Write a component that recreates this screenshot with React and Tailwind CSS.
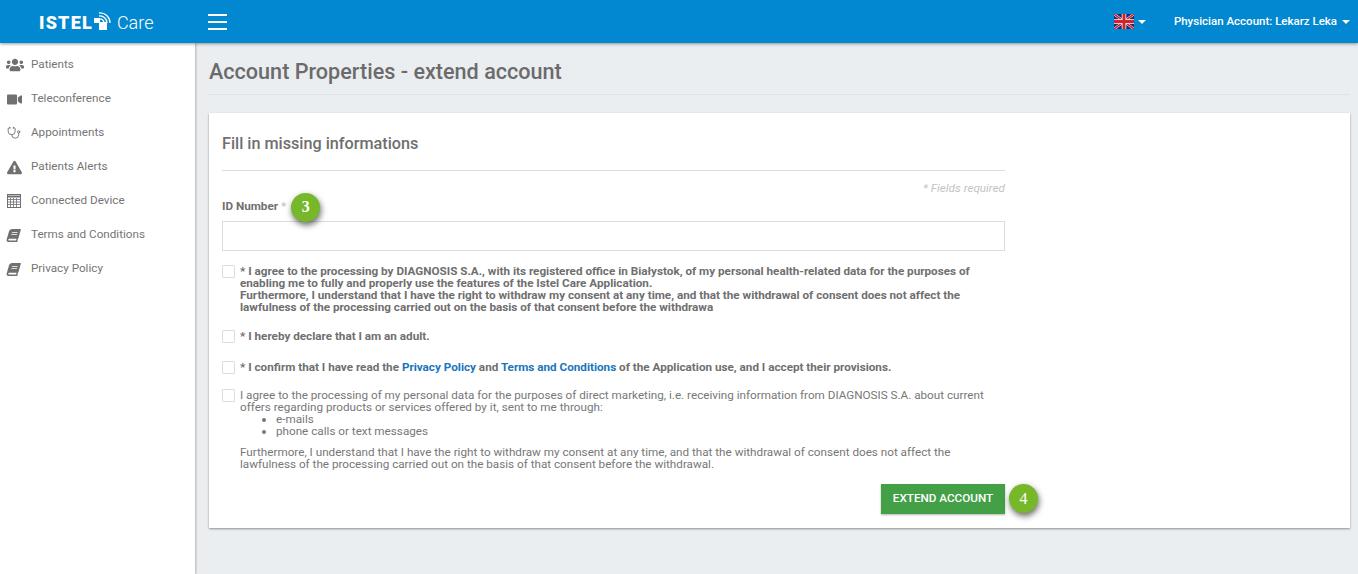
import React from "react";
import { FaUsers, FaVideo, FaExclamationTriangle, FaBook } from "react-icons/fa";
import { Stethoscope } from "lucide-react";

function GridIcon() {
  return (
    <svg width="14" height="14" viewBox="0 0 14 14" fill="none" stroke="currentColor">
      <rect x="0.5" y="0.5" width="13" height="13" strokeWidth="1" />
      <path d="M0.5 2.5h13" strokeWidth="2" />
      <path d="M0.5 5.5h13M0.5 8h13M0.5 10.5h13M3.5 4v9M6.5 4v9M9.5 4v9" strokeWidth="0.8" />
    </svg>
  );
}

const menu = [
  { label: "Patients", icon: <FaUsers size={18} className="-ml-[1px]" /> },
  { label: "Teleconference", icon: <FaVideo size={15} /> },
  { label: "Appointments", icon: <Stethoscope size={14} strokeWidth={1.5} /> },
  { label: "Patients Alerts", icon: <FaExclamationTriangle size={15} /> },
  { label: "Connected Device", icon: <GridIcon /> },
  { label: "Terms and Conditions", icon: <FaBook size={13} className="-skew-x-[16deg]" /> },
  { label: "Privacy Policy", icon: <FaBook size={13} className="-skew-x-[16deg]" /> },
];

function Logo() {
  return (
    <div className="flex items-end h-[19px] text-white">
      <span className="text-[18px] font-black tracking-[1.2px] leading-[16px]">ISTEL</span>
      <svg width="18" height="19" viewBox="0 0 18 19" fill="none" className="ml-[1px]">
        <rect x="0" y="6" width="6" height="5" fill="white" />
        <rect x="5" y="10" width="8" height="8" fill="white" />
        <path d="M5 7a4 4 0 0 1 5 4M5 4a7 7 0 0 1 8 7M5 1a10 10 0 0 1 11 10" stroke="white" strokeWidth="1.3" />
      </svg>
      <span className="ml-[5px] text-[18px] font-light leading-[17px]">Care</span>
    </div>
  );
}

function UkFlag() {
  return (
    <svg width="20" height="15" viewBox="0 0 20 15">
      <rect width="20" height="15" fill="#1f2a6b" />
      <path d="M0 0l20 15M20 0L0 15" stroke="white" strokeWidth="2.5" />
      <path d="M0 0l20 15M20 0L0 15" stroke="#d3202f" strokeWidth="1.6" />
      <path d="M10 0v15M0 7.5h20" stroke="white" strokeWidth="4.5" />
      <path d="M10 0v15M0 7.5h20" stroke="#d3202f" strokeWidth="3" />
    </svg>
  );
}

function Caret() {
  return <span className="inline-block w-0 h-0 border-x-[4px] border-x-transparent border-t-[4px] border-t-white" />;
}

function Badge({ n }) {
  return (
    <span className="flex shrink-0 items-center justify-center w-[29px] h-[29px] rounded-full bg-[#76b82a] text-white text-[16px] font-['Liberation_Serif',serif] shadow-[1px_3px_6px_rgba(0,0,0,0.6)]">
      {n}
    </span>
  );
}

function Check() {
  return <span className="block shrink-0 w-[13px] h-[13px] border border-[#dddddd] bg-white rounded-[1px]" />;
}

function Consent({ children, className = "" }) {
  return (
    <div className={`flex gap-[5px] ${className}`}>
      <Check />
      <div className="leading-[12px] w-[750px]">{children}</div>
    </div>
  );
}

export default function App() {
  return (
    <div className="w-[1358px] h-[574px] overflow-hidden flex flex-col bg-[#ebeef1] font-['Roboto',sans-serif] text-[11.7px] text-[#777777]">
      <header className="relative z-20 h-[43px] shrink-0 flex items-center bg-[#0288d1] shadow-[0_1px_3px_rgba(0,0,0,0.4)] text-white">
        <div className="w-[208px] pl-[39px]">
          <Logo />
        </div>
        <div className="flex flex-col gap-[5px] w-[19px]">
          <span className="h-[2px] bg-white" />
          <span className="h-[2px] bg-white" />
          <span className="h-[2px] bg-white" />
        </div>
        <div className="ml-auto flex items-center gap-[4px]">
          <UkFlag />
          <Caret />
        </div>
        <div className="ml-[28px] mr-[8px] flex items-center gap-[5px] font-medium text-[11.5px]">
          Physician Account: Lekarz Leka
          <Caret />
        </div>
      </header>

      <div className="flex flex-1 min-h-0">
        <aside className="relative z-10 w-[195px] shrink-0 bg-white shadow-[1px_0_2px_rgba(0,0,0,0.25)] pt-[5px]">
          {menu.map((item) => (
            <div key={item.label} className="flex items-center h-[34px] text-[#757575]">
              <span className="w-[31px] pl-[7px] flex items-center text-[#707070]">{item.icon}</span>
              {item.label}
            </div>
          ))}
        </aside>

        <main className="flex-1 pl-[14px] pr-[8px]">
          <h1 className="pt-[16px] pb-[9px] text-[21.6px] leading-[26px] font-medium text-[#6b6b6b] border-b border-[#dfe2e5]">
            Account Properties - extend account
          </h1>

          <section className="mt-[18px] h-[415px] bg-white px-[13px] pt-[21px] shadow-[0_1px_2px_rgba(0,0,0,0.4)]">
            <div className="w-[783px]">
              <h2 className="text-[16.2px] leading-[20px] font-medium text-[#6f6f6f] pb-[16px] border-b border-[#dddddd]">
                Fill in missing informations
              </h2>
              <p className="mt-[10px] text-right italic leading-[14px] text-[#c4c4c4]">* Fields required</p>
              <div className="flex items-center h-[14px] mt-[5px] font-bold text-[#6f6f6f]">
                ID Number <span className="ml-[3px] text-[#c4c4c4]">*</span>
                <span className="ml-[5px] flex items-center h-[14px]">
                  <Badge n={3} />
                </span>
              </div>
              <input className="block mt-[7px] w-full h-[30px] border border-[#dddddd] bg-white" />

              <Consent className="mt-[14px] font-bold text-[#6f6f6f]">
                * I agree to the processing by DIAGNOSIS S.A., with its registered office in Białystok, of my personal health-related data for the purposes of enabling me to fully and properly use the features of the Istel Care Application.
                <br />
                Furthermore, I understand that I have the right to withdraw my consent at any time, and that the withdrawal of consent does not affect the lawfulness of the processing carried out on the basis of that consent before the withdrawa
              </Consent>
              <Consent className="mt-[17px] font-bold text-[#6f6f6f]">* I hereby declare that I am an adult.</Consent>
              <Consent className="mt-[18px] font-bold text-[#6f6f6f]">
                * I confirm that I have read the <a className="text-[#1b75bb]">Privacy Policy</a> and{" "}
                <a className="text-[#1b75bb]">Terms and Conditions</a> of the Application use, and I accept their provisions.
              </Consent>
              <Consent className="mt-[15px]">
                I agree to the processing of my personal data for the purposes of direct marketing, i.e. receiving information from DIAGNOSIS S.A. about current offers regarding products or services offered by it, sent to me through:
                <ul className="list-disc pl-[36px]">
                  <li>e-mails</li>
                  <li>phone calls or text messages</li>
                </ul>
                <p className="mt-[9px]">
                  Furthermore, I understand that I have the right to withdraw my consent at any time, and that the withdrawal of consent does not affect the lawfulness of the processing carried out on the basis of that consent before the withdrawal.
                </p>
              </Consent>
              <div className="relative mt-[14px] flex justify-end">
                <button className="w-[124px] h-[30px] bg-[#43a047] text-white font-medium shadow-[0_1px_2px_rgba(0,0,0,0.3)]">
                  EXTEND ACCOUNT
                </button>
                <span className="absolute left-[787px] top-0">
                  <Badge n={4} />
                </span>
              </div>
            </div>
          </section>
        </main>
      </div>
    </div>
  );
}
